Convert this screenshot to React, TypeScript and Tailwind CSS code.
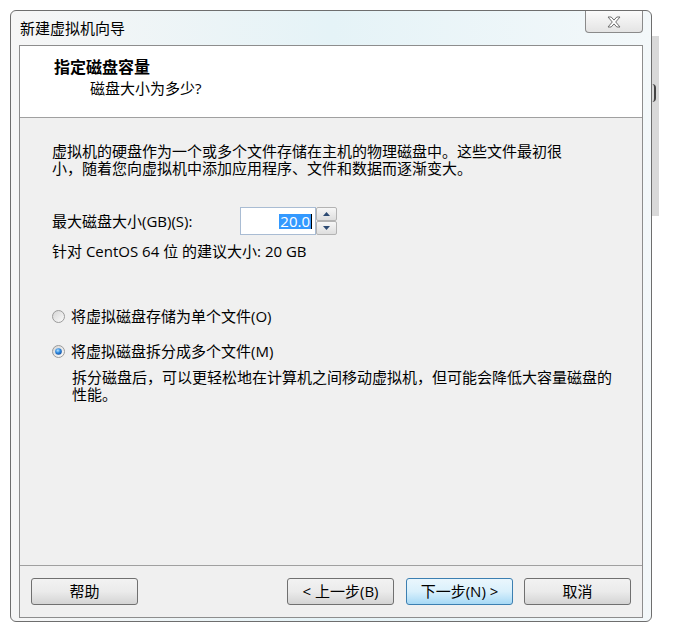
import React from "react";

const font = "font-['Open_Sans','Noto_Sans_CJK_SC','Microsoft_YaHei',sans-serif]";

function CloseGlyph() {
  return (
    <svg width="14" height="12" viewBox="0 0 14 12">
      <polygon
        points="1,1 4.2,1 7,4.1 9.8,1 13,1 8.7,6 13,11 9.8,11 7,7.9 4.2,11 1,11 5.3,6"
        fill="#ffffff"
        stroke="#6f6f6f"
        strokeWidth="1"
        strokeLinejoin="round"
      />
    </svg>
  );
}

function Radio({ checked }: { checked?: boolean }) {
  return (
    <svg width="13" height="13" viewBox="0 0 13 13" className="shrink-0">
      <defs>
        <linearGradient id="ring" x1="0" y1="0" x2="1" y2="1">
          <stop offset="0" stopColor="#d4d4d4" />
          <stop offset="1" stopColor="#fdfdfd" />
        </linearGradient>
        <radialGradient id="dot" cx="0.4" cy="0.35" r="0.7">
          <stop offset="0" stopColor="#b9e4ff" />
          <stop offset="0.5" stopColor="#2f8ae0" />
          <stop offset="1" stopColor="#16509f" />
        </radialGradient>
      </defs>
      <circle cx="6.5" cy="6.5" r="6" fill="url(#ring)" stroke="#9a9a9a" />
      {checked && <circle cx="6.5" cy="6.5" r="3.3" fill="url(#dot)" />}
    </svg>
  );
}

function SpinHalf({ up }: { up?: boolean }) {
  return (
    <div className="h-[14px] w-[21px] border border-[#b3b3b3] bg-gradient-to-b from-[#f7f7f7] to-[#dedede] flex items-center justify-center rounded-[2px]">
      <svg width="7" height="4" viewBox="0 0 7 4">
        <polygon points={up ? "0,4 7,4 3.5,0" : "0,0 7,0 3.5,4"} fill="#2c4a72" />
      </svg>
    </div>
  );
}

function WinButton({ children, primary }: { children: React.ReactNode; primary?: boolean }) {
  return (
    <button
      className={
        primary
          ? "w-[107px] h-[27px] rounded-[3px] border border-[#3c7fb1] bg-gradient-to-b from-[#eaf6fd] via-[#d9f0fc] to-[#a7d9f5] text-[15px] text-black leading-none"
          : "w-[107px] h-[27px] rounded-[3px] border border-[#707070] bg-gradient-to-b from-[#f2f2f2] via-[#ebebeb] to-[#d4d4d4] text-[15px] text-black leading-none"
      }
    >
      {children}
    </button>
  );
}

export default function App() {
  return (
    <div className={`relative w-[685px] h-[633px] bg-white overflow-hidden ${font} text-black`}>
      {/* desktop bit showing behind the window */}
      <div className="absolute left-[651px] top-[36px] w-[8px] h-[180px] bg-[#d9d9d9]">
        <div className="mt-[48px] ml-[1px] w-[4px] h-[18px] rounded-r-full border-r-2 border-[#444]" />
      </div>

      <div className="pt-[10px] pl-[10px]">
        <div className="relative w-[642px] h-[612px] rounded-[6px] border border-[#6e6e6e] bg-gradient-to-r from-[#f6f6f6] via-[#e5f3f7] to-[#f3f8fa] flex flex-col px-[8px]">
          {/* title bar */}
          <div className="h-[34px] flex justify-between items-start">
            <div className="pt-[7px] pl-[1px] text-[15px] leading-[20px]">新建虚拟机向导</div>
            <div className="w-[58px] h-[22px] border border-t-0 border-[#8a8a8a] rounded-b-[4px] bg-gradient-to-b from-[#fbfbfb] to-[#e4e4e4] flex items-center justify-center">
              <CloseGlyph />
            </div>
          </div>

          {/* client area */}
          <div className="w-[624px] h-[573px] border border-[#8d8d8d] flex flex-col">
            <div className="h-[72px] bg-white border-b border-[#a0a0a0] pt-[11px] pl-[34px]">
              <div className="text-[16px] font-bold leading-[20px]">指定磁盘容量</div>
              <div className="pl-[36px] text-[15px] leading-[20px] mt-[1px]">磁盘大小为多少?</div>
            </div>

            <div className="flex-1 bg-[#f0f0f0] pl-[32px] pt-[25px] text-[15px]">
              <p className="leading-[17px] whitespace-nowrap">
                虚拟机的硬盘作为一个或多个文件存储在主机的物理磁盘中。这些文件最初很
                <br />
                小，随着您向虚拟机中添加应用程序、文件和数据而逐渐变大。
              </p>

              <div className="mt-[30px] flex items-center h-[28px]">
                <div className="w-[188px] leading-[17px]">最大磁盘大小(GB)(S):</div>
                <div className="w-[76px] h-[28px] border border-[#a9bcd3] bg-white flex items-center justify-end pr-[3px]">
                  <span className="bg-[#3399ff] text-white leading-[15px] px-[1px]">20.0</span>
                  <span className="w-[1px] h-[15px] bg-black" />
                </div>
                <div className="flex flex-col">
                  <SpinHalf up />
                  <SpinHalf />
                </div>
              </div>

              <div className="mt-[8px] leading-[17px]">针对 CentOS 64 位 的建议大小: 20 GB</div>

              <div className="mt-[48px] flex items-center gap-[6px] h-[17px]">
                <Radio />
                <span className="leading-[17px]">将虚拟磁盘存储为单个文件(O)</span>
              </div>

              <div className="mt-[18px] flex items-center gap-[6px] h-[17px]">
                <Radio checked />
                <span className="leading-[17px]">将虚拟磁盘拆分成多个文件(M)</span>
              </div>

              <p className="mt-[9px] pl-[20px] leading-[17px] whitespace-nowrap">
                拆分磁盘后，可以更轻松地在计算机之间移动虚拟机，但可能会降低大容量磁盘的
                <br />
                性能。
              </p>
            </div>

            <div className="h-[52px] border-t border-[#a0a0a0] bg-[#f0f0f0] flex justify-between items-start pt-[12px] px-[11px]">
              <WinButton>帮助</WinButton>
              <div className="flex gap-[12px]">
                <WinButton>&lt; 上一步(B)</WinButton>
                <WinButton primary>下一步(N) &gt;</WinButton>
                <div className="ml-[-1px]">
                  <WinButton>取消</WinButton>
                </div>
              </div>
            </div>
          </div>
        </div>
      </div>
    </div>
  );
}
